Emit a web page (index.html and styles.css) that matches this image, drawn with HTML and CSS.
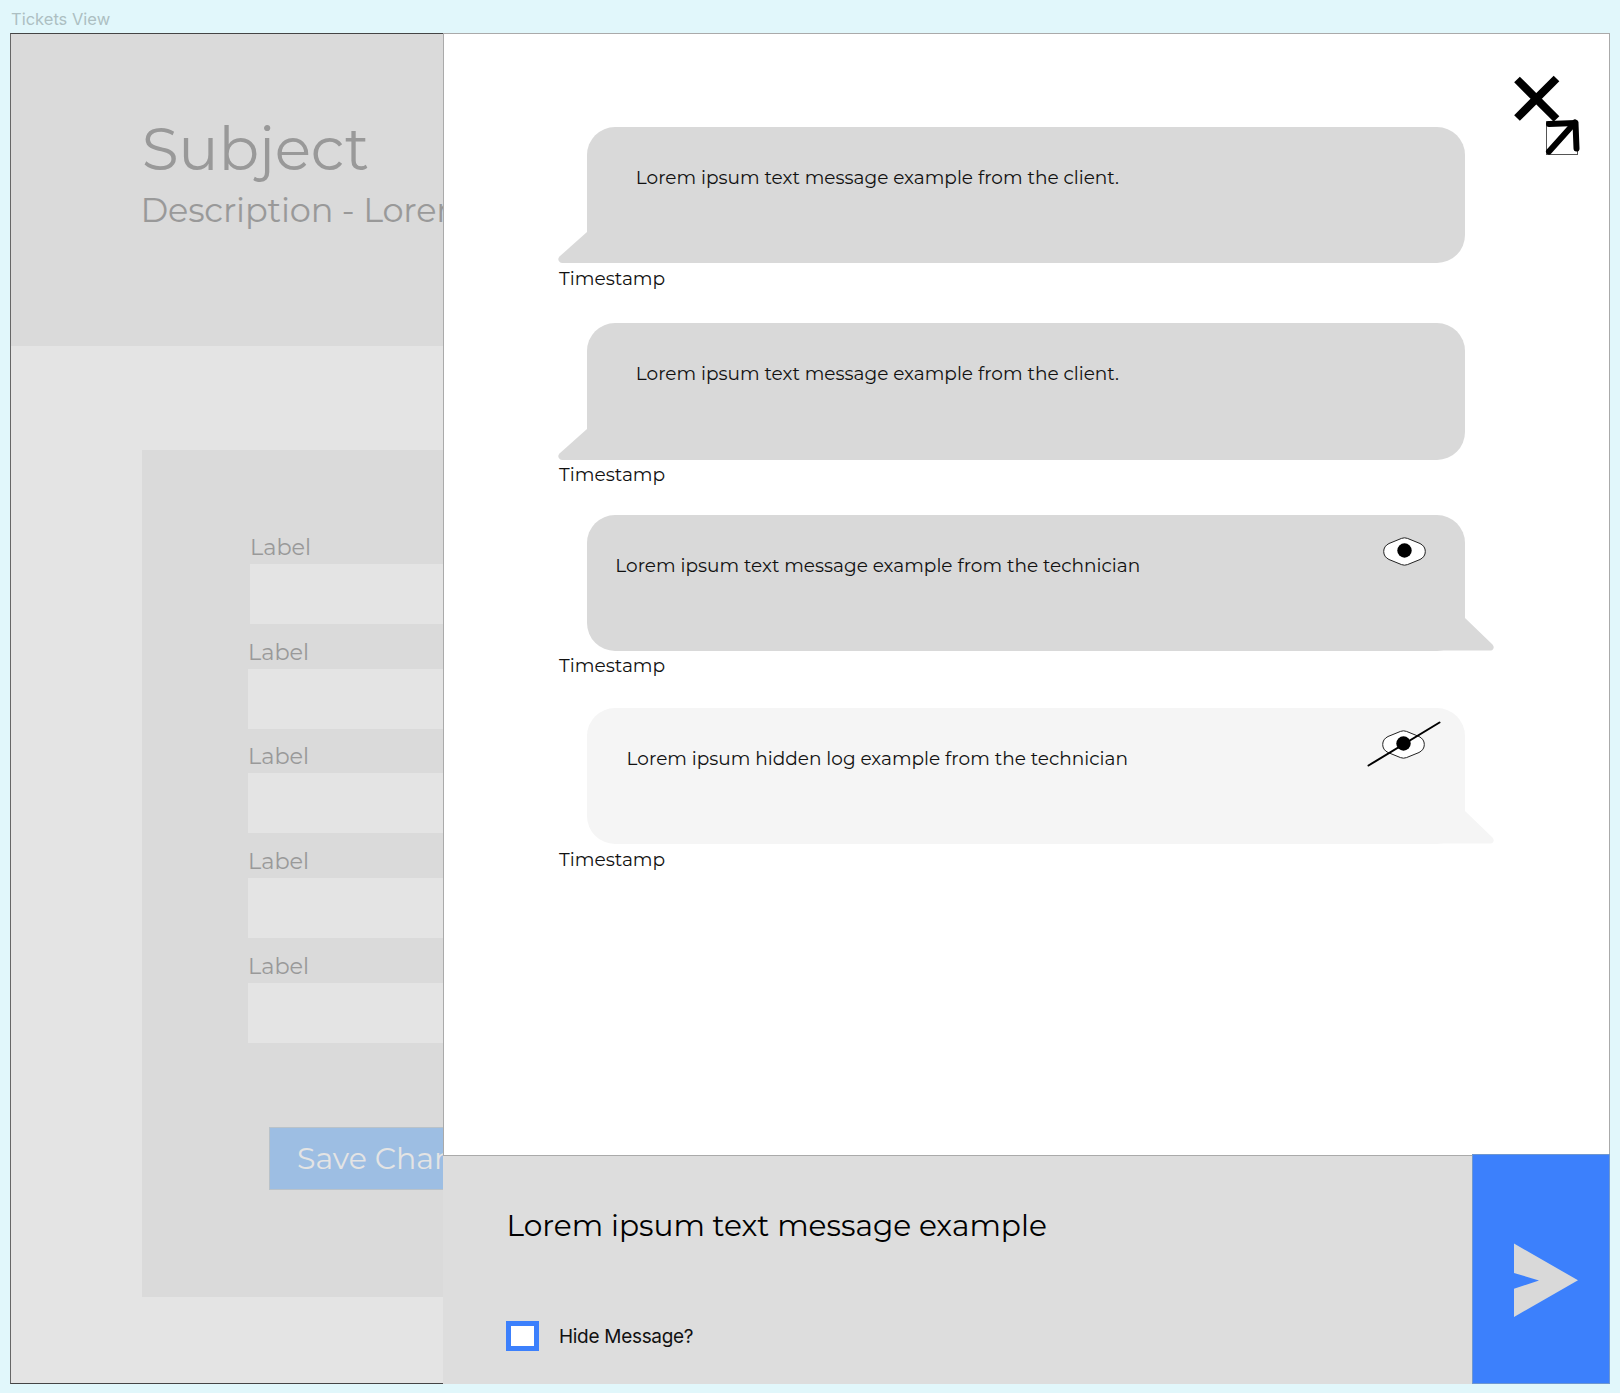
FILE: index.html
```html
<!DOCTYPE html>
<html lang="en">
<head>
<meta charset="utf-8">
<title>Tickets View</title>
<link rel="stylesheet" href="styles.css">
</head>
<body>
<div class="frame-name">Tickets View</div>
<div class="frame">
  <main class="ticket">
    <header class="ticket-header">
      <h1 class="subject">Subject</h1>
      <p class="description">Description - Lorem</p>
    </header>
    <form class="card">
      <label class="field field-first"><span class="label">Label</span><span class="input"></span></label>
      <label class="field"><span class="label">Label</span><span class="input"></span></label>
      <label class="field"><span class="label">Label</span><span class="input"></span></label>
      <label class="field"><span class="label">Label</span><span class="input"></span></label>
      <label class="field"><span class="label">Label</span><span class="input"></span></label>
      <div class="save">Save Changes</div>
    </form>
  </main>
  <aside class="drawer">
    <section class="thread">
      <svg class="window-icons" width="66" height="80" viewBox="0 0 66 80">
        <path d="M4 4.500 43.500 44M43.500 3.500 4 43" stroke="#000" stroke-width="8" fill="none"/>
        <rect x="33.500" y="46.500" width="31" height="33" fill="none" stroke="#555" stroke-width="1"/>
        <path d="M36 76.500 62 47.500" stroke="#000" stroke-width="6" stroke-linecap="round"/>
        <path d="M36 49 62.500 48 63.500 73.500" stroke="#000" stroke-width="6" stroke-linecap="round" stroke-linejoin="round" fill="none"/>
      </svg>
      <article class="message">
        <div class="bubble"><p class="text text-client">Lorem ipsum text message example from the client.</p>
          <svg class="tail tail-left" width="60" height="31" viewBox="0 0 60 31"><path d="M29 0 1.500 24.500Q-.5 27 .8 29T4 31H58V0Z"/></svg>
        </div>
        <time class="stamp">Timestamp</time>
      </article>
      <article class="message message-second">
        <div class="bubble"><p class="text text-client">Lorem ipsum text message example from the client.</p>
          <svg class="tail tail-left" width="60" height="31" viewBox="0 0 60 31"><path d="M29 0 1.500 24.500Q-.5 27 .8 29T4 31H58V0Z"/></svg>
        </div>
        <time class="stamp">Timestamp</time>
      </article>
      <article class="message message-third">
        <div class="bubble"><p class="text text-tech">Lorem ipsum text message example from the technician</p>
          <svg class="tail tail-right" width="60" height="33" viewBox="0 0 60 33"><path d="M31 0 58.500 26.500Q60.500 29 59.200 31T56 32.500H2V0Z"/></svg>
          <svg class="eye" width="76" height="48" viewBox="0 0 76 48"><path class="eye-shape" d="M34.500 10.400Q37.500 9.200 40.500 10.400L53 15.500Q58.300 18.200 58.300 23.500T53 31.500L40.500 36.600Q37.500 37.800 34.500 36.600L22 31.500Q16.700 28.800 16.700 23.500T22 15.500Z"/><circle cx="37.500" cy="22.500" r="7.200"/></svg>
        </div>
        <time class="stamp">Timestamp</time>
      </article>
      <article class="message message-fourth">
        <div class="bubble bubble-hidden"><p class="text text-log">Lorem ipsum hidden log example from the technician</p>
          <svg class="tail tail-right" width="60" height="33" viewBox="0 0 60 33"><path d="M31 0 58.500 26.500Q60.500 29 59.200 31T56 32.500H2V0Z"/></svg>
          <svg class="eye eye-off" width="76" height="48" viewBox="0 0 76 48"><path class="eye-shape" d="M34.500 10.400Q37.500 9.200 40.500 10.400L53 15.500Q58.300 18.200 58.300 23.500T53 31.500L40.500 36.600Q37.500 37.800 34.500 36.600L22 31.500Q16.700 28.800 16.700 23.500T22 15.500Z"/><circle cx="37.500" cy="22.500" r="7.200"/><path class="slash" d="M2.500 44.500 73.500 1.500"/></svg>
        </div>
        <time class="stamp">Timestamp</time>
      </article>
    </section>
    <footer class="composer">
      <div class="composer-body">
        <p class="draft">Lorem ipsum text message example</p>
        <div class="hide-option"><span class="checkbox"></span><span class="hide-label">Hide Message?</span></div>
      </div>
      <div class="send"><svg width="65" height="74" viewBox="0 0 65 74"><path d="M0 .500 64 37.300 0 74V45.800L25 37.500 0 30Z" fill="#d9d9d9"/></svg></div>
    </footer>
  </aside>
</div>
</body>
</html>
```
FILE: styles.css
```css
* { box-sizing: border-box; }
body {
  margin: 0;
  height: 1393px;
  overflow: hidden;
  background: #e1f7fb;
  font-family: Montserrat, Inter, sans-serif;
  color: #111;
}
h1, p { margin: 0; font-weight: 400; }
svg { display: block; }

.frame-name {
  height: 33px;
  padding-left: 11px;
  font: 400 16.500px/39px Inter, sans-serif;
  color: #adbfc2;
}
.frame { display: flex; width: 1600px; height: 1351px; margin-left: 10px; }

.ticket {
  width: 432.500px;
  overflow: hidden;
  white-space: nowrap;
  background: #e4e4e4;
  border: 1px solid #444;
  border-left-color: #666;
  border-right: 0;
  color: #999;
}
.ticket-header { height: 312px; padding: 78px 0 0 131px; background: #dadada; }
.subject { font-size: 60px; line-height: 74px; margin-left: -.300px; letter-spacing: -.250px; }
.description { font-size: 33.600px; line-height: 47px; margin-left: -1.500px; letter-spacing: -.180px; }

.card { width: 500px; height: 847px; margin: 104px 0 0 131px; padding: 87px 0 0 105.500px; background: #dadada; }
.field { display: block; height: 104.700px; }
.field-first { margin-left: 2px; }
.label { display: block; height: 27px; padding-left: .500px; font-size: 22.400px; line-height: 21.500px; }
.input { display: block; height: 60px; background: #e4e4e4; }
.save {
  width: 300px;
  height: 63px;
  margin: 67px 0 0 21px;
  padding-left: 27.500px;
  background: #9dbee3;
  border: 1px solid #b9c2c9;
  color: #e4e4e4;
  font-size: 30px;
  line-height: 61px;
}

.drawer { display: flex; flex-direction: column; width: 1167.500px; }
.thread {
  position: relative;
  height: 1123px;
  padding: 93px 0 0 115.500px;
  background: #fff;
  border: 1px solid #aaa;
}
.window-icons { position: absolute; left: 1069.500px; top: 41px; overflow: visible; }

.message { width: 935px; height: 163.300px; }
.message-second { margin-top: 33px; }
.message-third { margin-top: 28.200px; }
.message-fourth { margin-top: 30px; }
.bubble {
  position: relative;
  width: 877.500px;
  height: 136.300px;
  margin-left: 28.300px;
  padding-top: 39px;
  border-radius: 28px;
  background: #d9d9d9;
  fill: #d9d9d9;
}
.bubble-hidden { background: #f5f5f5; fill: #f5f5f5; }
.text, .stamp { font-size: 18.500px; line-height: 24px; white-space: nowrap; }
.text-client { padding-left: 48.500px; }
.text-tech { padding-left: 28px; }
.text-log { padding-left: 39.300px; }
.stamp { display: block; margin-top: 3.400px; font-size: 18.600px; }
.tail { position: absolute; bottom: 0; }
.tail-left { left: -29px; }
.tail-right { right: -29px; bottom: .5px; }
.eye { position: absolute; left: 780px; top: 13.300px; fill: #000; }
.eye-off { left: 779px; top: 12.500px; }
.eye-shape { fill: #fff; stroke: #222; stroke-width: 1; }
.slash { stroke: #000; stroke-width: 2; stroke-linecap: round; }

.composer { display: flex; height: 228px; background: #ddd; }
.composer-body { width: 1029.500px; padding: 48px 0 0 63.500px; }
.draft { font-size: 29.650px; line-height: 42px; margin-left: .500px; color: #000; }
.hide-option { display: flex; align-items: center; height: 30px; margin-top: 75px; }
.checkbox { width: 33px; height: 30px; background: #fff; border: 5px solid #3c80fc; }
.hide-label { margin-left: 20px; font: 400 19px/30px Inter, sans-serif; letter-spacing: -.300px; color: #111; padding-top: 2px; }
.send {
  width: 138px;
  height: 230px;
  margin-top: -2px;
  padding: 88px 0 0 41px;
  position: relative;
  background: #3c80fc;
  border: 1px solid #6f97cf;
}
```
